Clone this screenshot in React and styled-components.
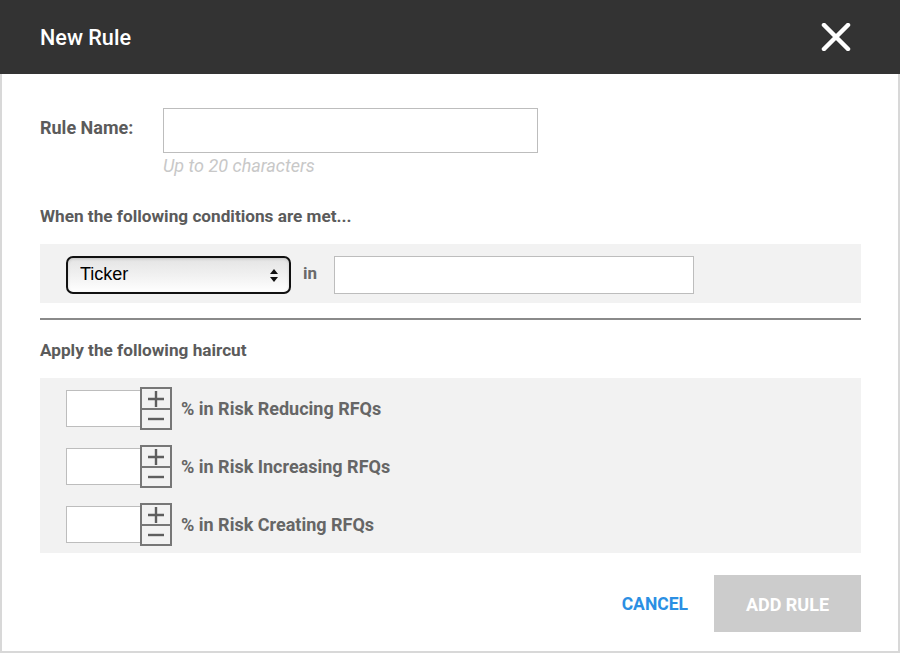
import React from 'react'
import styled, { createGlobalStyle } from 'styled-components'

const GlobalStyle = createGlobalStyle`
  body {
    margin: 0;
    background: #fff;
    font-family: Roboto, "Liberation Sans", Arial, sans-serif;
  }
  * { box-sizing: border-box; }
`

const Dialog = styled.div`
  width: 900px;
  height: 653px;
  display: flex;
  flex-direction: column;
`

const Header = styled.div`
  height: 74px;
  flex-shrink: 0;
  background: #333333;
  display: flex;
  align-items: center;
  justify-content: space-between;
  padding: 0 48px 0 40px;
`

const Title = styled.h1`
  margin: 0;
  color: #fff;
  font-size: 21.6px;
  font-weight: 500;
`

const CloseButton = styled.button`
  border: none;
  background: none;
  padding: 0;
  width: 32px;
  height: 28px;
  display: flex;
  cursor: pointer;
`

const Body = styled.div`
  flex: 1;
  border: 2px solid #d8d8d8;
  border-top: none;
  padding: 34px 37px 0 38px;
  display: flex;
  flex-direction: column;
`

const NameRow = styled.div`
  display: flex;
  align-items: flex-start;
`

const Label = styled.label`
  width: 123px;
  font-size: 18px;
  font-weight: 700;
  color: #5b5b5b;
  padding-top: 9px;
`

const NameField = styled.div`
  display: flex;
  flex-direction: column;
`

const TextInput = styled.input`
  width: ${(p) => p.w}px;
  height: ${(p) => p.h}px;
  border: 1px solid #bdbdbd;
  background: #fff;
  outline: none;
  font-size: 16px;
  padding: 0 10px;
`

const Hint = styled.span`
  margin-top: 2px;
  font-size: 18px;
  font-style: italic;
  color: #c8c8c8;
`

const SectionTitle = styled.h2`
  margin: ${(p) => p.top}px 0 0;
  font-size: 17.2px;
  font-weight: 700;
  color: #5b5b5b;
  line-height: 20px;
`

const Panel = styled.div`
  margin-top: ${(p) => p.top}px;
  background: #f2f2f2;
  padding: ${(p) => p.pad};
  display: flex;
  flex-direction: ${(p) => (p.column ? 'column' : 'row')};
  align-items: ${(p) => (p.column ? 'flex-start' : 'center')};
  gap: ${(p) => p.gap}px;
`

const SelectWrap = styled.div`
  position: relative;
  width: 225px;
  height: 38px;
`

const Select = styled.select`
  appearance: none;
  -webkit-appearance: none;
  width: 100%;
  height: 100%;
  border: 2px solid #111;
  border-radius: 7px;
  background: linear-gradient(#e4e4e4, #f2f2f2 55%, #ffffff);
  box-shadow: inset 0 1px 3px rgba(0, 0, 0, 0.15);
  font-family: "Liberation Sans", Arial, sans-serif;
  font-size: 18px;
  color: #000;
  padding: 0 0 3px 12px;
  outline: none;
`

const SelectArrows = styled.svg`
  position: absolute;
  right: 13px;
  top: 13px;
  pointer-events: none;
`

const InWord = styled.span`
  font-size: 17px;
  font-weight: 700;
  color: #6a6a6a;
  margin-right: 5px;
  padding-bottom: 4px;
`

const Divider = styled.hr`
  margin: 15px 0 0;
  border: none;
  border-top: 2px solid #8a8a8a;
  height: 0;
`

const HaircutRow = styled.div`
  display: flex;
  align-items: center;
`

const NumberInput = styled.input`
  width: 75px;
  height: 37px;
  border: 1px solid #bdbdbd;
  background: #fff;
  outline: none;
  margin-right: -1px;
`

const Stepper = styled.div`
  width: 32px;
  height: 43px;
  border: 2px solid #777;
  display: flex;
  flex-direction: column;
  background: #f2f2f2;
`

const StepButton = styled.button`
  height: ${(p) => (p.bottom ? 20 : 19)}px;
  border: none;
  border-top: ${(p) => (p.bottom ? '2px solid #777' : 'none')};
  background: none;
  padding: 0;
  display: flex;
  align-items: center;
  justify-content: center;
  cursor: pointer;
`

const RowLabel = styled.span`
  margin-left: 9px;
  font-size: 18px;
  font-weight: 700;
  color: #666;
`

const Footer = styled.div`
  margin-top: 22px;
  display: flex;
  justify-content: flex-end;
  align-items: center;
  gap: 26px;
`

const CancelButton = styled.button`
  border: none;
  background: none;
  padding: 0;
  font-family: inherit;
  font-size: 17.5px;
  font-weight: 700;
  color: #2b8fe3;
  cursor: pointer;
`

const AddButton = styled.button`
  width: 147px;
  height: 57px;
  border: none;
  background: #cccccc;
  color: #fff;
  font-family: inherit;
  font-size: 18px;
  font-weight: 700;
  padding-top: 2px;
`

const Plus = () => (
  <svg width="18" height="18" viewBox="0 0 18 18">
    <path d="M9 1v16M1 9h16" stroke="#5e5e5e" strokeWidth="2.4" />
  </svg>
)

const Minus = () => (
  <svg width="18" height="4" viewBox="0 0 18 4">
    <path d="M1 2h16" stroke="#5e5e5e" strokeWidth="2.4" />
  </svg>
)

const haircuts = [
  '% in Risk Reducing RFQs',
  '% in Risk Increasing RFQs',
  '% in Risk Creating RFQs',
]

const App = () => {
  return (
    <Dialog>
      <GlobalStyle />
      <Header>
        <Title>New Rule</Title>
        <CloseButton aria-label="Close">
          <svg width="32" height="28" viewBox="0 0 32 28">
            <path d="M4 2L28 26M28 2L4 26" stroke="#fff" strokeWidth="4.5" strokeLinecap="round" />
          </svg>
        </CloseButton>
      </Header>
      <Body>
        <NameRow>
          <Label>Rule Name:</Label>
          <NameField>
            <TextInput w={375} h={45} />
            <Hint>Up to 20 characters</Hint>
          </NameField>
        </NameRow>

        <SectionTitle top={30}>When the following conditions are met...</SectionTitle>
        <Panel top={18} pad="12px 26px 9px" gap={12}>
          <SelectWrap>
            <Select defaultValue="Ticker">
              <option>Ticker</option>
            </Select>
            <SelectArrows width="8" height="13" viewBox="0 0 8 13">
              <path d="M4 0L8 5H0z M4 13L8 8H0z" fill="#111" />
            </SelectArrows>
          </SelectWrap>
          <InWord>in</InWord>
          <TextInput w={360} h={38} />
        </Panel>

        <Divider />

        <SectionTitle top={20}>Apply the following haircut</SectionTitle>
        <Panel top={18} pad="9px 26px 7px" gap={15} column>
          {haircuts.map((text) => (
            <HaircutRow key={text}>
              <NumberInput />
              <Stepper>
                <StepButton><Plus /></StepButton>
                <StepButton bottom><Minus /></StepButton>
              </Stepper>
              <RowLabel>{text}</RowLabel>
            </HaircutRow>
          ))}
        </Panel>

        <Footer>
          <CancelButton>CANCEL</CancelButton>
          <AddButton disabled>ADD RULE</AddButton>
        </Footer>
      </Body>
    </Dialog>
  )
}

export default App
